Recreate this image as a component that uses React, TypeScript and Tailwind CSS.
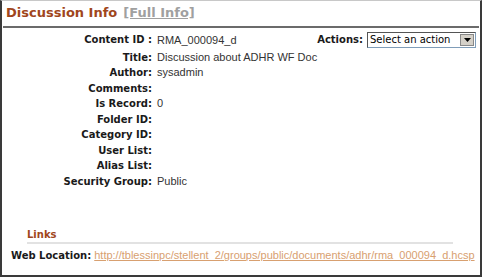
export default function App() {
  const rows: [string, string][] = [
    ['Title:', 'Discussion about ADHR WF Doc'],
    ['Author:', 'sysadmin'],
    ['Comments:', ''],
    ['Is Record:', '0'],
    ['Folder ID:', ''],
    ['Category ID:', ''],
    ['User List:', ''],
    ['Alias List:', ''],
    ['Security Group:', 'Public'],
  ]
  const label = 'font-["DejaVu_Sans",Verdana,sans-serif] text-[10px] font-bold text-[#1a1a1a] whitespace-nowrap'
  const value = 'font-["Liberation_Sans",Arial,sans-serif] text-[11px] text-[#333] whitespace-nowrap'

  return (
    <div className="h-[277px] w-[482px] overflow-hidden border-x-2 border-b-2 border-t border-x-[#3a3a3a] border-b-[#3a3a3a] border-t-[#c8c8c8] bg-white">
      <div className="mx-[1px] flex items-baseline gap-[6px] border-b-2 border-[#6b6b6b] px-[3px] pb-[3px] pt-[2px] font-['DejaVu_Sans',Verdana,sans-serif] font-bold">
        <span className="text-[13px] text-[#a0461c]">Discussion Info</span>
        <a className="text-[13px] text-[#a0a0a0] underline">[Full Info]</a>
      </div>

      <div className="flex items-start pt-[2px]">
        <div className="grid flex-1 grid-cols-[150px_1fr] gap-x-[5px]">
          <div className={`${label} text-right leading-[20px]`}>Content ID :</div>
          <div className={`${value} leading-[20px]`}>RMA_000094_d</div>
          {rows.map(([l, v]) => (
            <div key={l} className="contents">
              <div className={`${label} text-right leading-[15.5px]`}>{l}</div>
              <div className={`${value} leading-[15.5px]`}>{v}</div>
            </div>
          ))}
        </div>
        <div className="mr-[4px] mt-[2px] flex shrink-0 items-center gap-[4px]">
          <span className={label}>Actions:</span>
          <div className="flex h-[16px] w-[109px] items-center justify-between border border-[#7f9db9] border-l-[#555] border-t-[#555] bg-white pl-[2px]">
            <span className="font-['DejaVu_Sans',Verdana,sans-serif] text-[10px] text-black">Select an action</span>
            <span className="mr-[1px] flex h-[12px] w-[14px] items-center justify-center border border-[#888] bg-[#d4d0c8]">
              <svg width="7" height="4" viewBox="0 0 7 4"><path d="M0 0h7L3.5 4z" fill="#000" /></svg>
            </span>
          </div>
        </div>
      </div>

      <div className="ml-[25px] mr-[27px] mt-[38px] border-b-2 border-[#e2e2e2] font-['DejaVu_Sans',Verdana,sans-serif] text-[10px] font-bold text-[#a0461c]">
        Links
      </div>
      <div className="mt-[3px] flex items-baseline gap-[3px] pl-[9px]">
        <span className={label}>Web Location:</span>
        <a className="font-['Liberation_Sans',Arial,sans-serif] text-[11px] whitespace-nowrap text-[#d8a070] underline">
          http://tblessinpc/stellent_2/groups/public/documents/adhr/rma_000094_d.hcsp
        </a>
      </div>
    </div>
  )
}
